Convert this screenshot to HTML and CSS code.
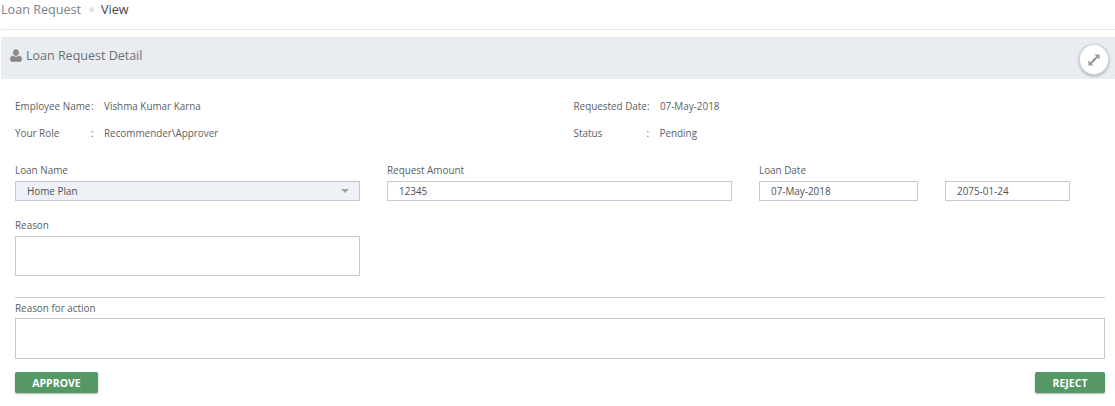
FILE: index.html
```html
<!DOCTYPE html>
<html lang="en">
<head>
<meta charset="utf-8">
<title>Loan Request - View</title>
<link rel="stylesheet" href="styles.css">
</head>
<body>
<header class="crumbs">
  <div class="crumb-list">
    <span class="crumb-parent">Loan Request</span>
    <span class="crumb-dot"></span>
    <span class="crumb-current">View</span>
  </div>
  <a class="top-link">Picture</a>
</header>
<section class="card">
  <div class="card-head">
    <svg class="user-icon" viewBox="0 0 12 13" width="12" height="13"><path d="M6 .3c1.700 0 3 1.400 3 3.200S7.700 6.900 6 6.900 3 5.300 3 3.500 4.300.3 6 .3zM3 6.500c.8.800 1.900 1.200 3 1.200s2.200-.4 3-1.200c1.900.2 2.900 1.700 2.900 3.900 0 1.500-.9 2.300-2.100 2.300H2.200C1 12.700.1 11.900.1 10.400.1 8.200 1.100 6.700 3 6.500z"/></svg>
    <h2 class="card-title">Loan Request Detail</h2>
    <button class="expand" type="button" aria-label="Expand">
      <svg viewBox="0 0 12 12" width="12" height="12"><path d="M6.400 .4h5.200v5.200L9.700 3.700 3.700 9.700l1.900 1.900H.4V6.400l1.900 1.900 6-6z"/><path d="M4 6.400 6.400 4 8 5.600 5.600 8z"/></svg>
    </button>
  </div>
  <div class="card-body">
    <div class="info-grid">
      <div class="info"><span class="info-label">Employee Name</span><span class="info-colon">:</span><span>Vishma Kumar Karna</span></div>
      <div class="info info-right"><span class="info-label">Requested Date</span><span class="info-colon">:</span><span>07-May-2018</span></div>
      <div class="info"><span class="info-label">Your Role</span><span class="info-colon">:</span><span>Recommender\Approver</span></div>
      <div class="info info-right"><span class="info-label">Status</span><span class="info-colon">:</span><span>Pending</span></div>
    </div>
    <div class="form-grid">
      <div class="field">
        <label class="label">Loan Name</label>
        <div class="control select">Home Plan<span class="caret"></span></div>
      </div>
      <div class="field">
        <label class="label">Request Amount</label>
        <div class="control">12345</div>
      </div>
      <div class="field">
        <label class="label">Loan Date</label>
        <div class="control">07-May-2018</div>
      </div>
      <div class="field">
        <div class="control">2075-01-24</div>
      </div>
    </div>
    <div class="field reason">
      <label class="label">Reason</label>
      <div class="control area"></div>
    </div>
    <hr class="rule">
    <div class="field action">
      <label class="label">Reason for action</label>
      <div class="control area wide"></div>
    </div>
    <div class="buttons">
      <button class="btn" type="button">APPROVE</button>
      <button class="btn reject" type="button">REJECT</button>
    </div>
  </div>
</section>
</body>
</html>
```
FILE: styles.css
```css
* { box-sizing: border-box; }
html, body { height: 100%; }
body {
  margin: 0;
  overflow: hidden;
  background: #fff;
  color: #5a5e64;
  font-family: "Open Sans", sans-serif;
  font-size: 9.9px;
}
.crumbs {
  height: 30px;
  margin-left: 1px;
  border-bottom: 1px solid #e7e9ec;
  display: flex;
  justify-content: space-between;
  overflow: hidden;
}
.crumb-list {
  display: flex;
  align-items: center;
  height: 18px;
  font-size: 12.600px;
}
.crumb-parent { color: #7d8187; }
.crumb-dot {
  width: 5px;
  height: 5px;
  border-radius: 50%;
  background: #dfe2e6;
  margin: 0 7px 0 8px;
}
.crumb-current { color: #3f4449; }
.top-link {
  color: #1f7fc4;
  font-size: 12.500px;
  line-height: 14px;
  margin: -13px 95px 0 0;
}
.card { margin: 7px 0 0 1px; }
.card-head {
  height: 42px;
  background: #e9ecf1;
  display: flex;
  align-items: center;
  padding: 0 6px 0 9px;
}
.user-icon { fill: #8c8a88; margin: 0 4px 6px 0; }
.card-title {
  margin: 0 0 6px;
  flex: 1;
  font-size: 12.500px;
  font-weight: 400;
  color: #6b6f76;
}
.expand {
  width: 30px;
  height: 31px;
  margin-top: 3px;
  padding: 0;
  border: 1px solid #d4d5d7;
  border-radius: 50%;
  background: #fff;
  box-shadow: 0 1px 3px rgba(0,0,0,.3);
  display: flex;
  align-items: center;
  justify-content: center;
}
.expand svg { fill: #9b9b9b; }
.card-body { padding: 20px 10px 0 14px; }
.info-grid {
  display: grid;
  grid-template-columns: 558.500px 1fr;
  row-gap: 13px;
}
.info { display: flex; line-height: 14px; white-space: nowrap; }
.info-label { flex: 0 0 76px; }
.info-colon { flex: 0 0 13px; }
.info-right .info-label { flex-basis: 73px; }
.form-grid {
  display: grid;
  grid-template-columns: 345px 345px 159px 125px;
  column-gap: 27px;
  margin-top: 23px;
  align-items: end;
}
.label {
  display: block;
  line-height: 14px;
  margin-bottom: 4px;
}
.control {
  height: 20px;
  line-height: 18px;
  border: 1px solid #c2cad8;
  background: #fff;
  padding: 0 11px;
  color: #4d5157;
}
.select {
  background: #eef1f5;
  position: relative;
}
.caret {
  position: absolute;
  right: 10px;
  top: 7px;
  border: 4px solid transparent;
  border-top-color: #9fa3a8;
  border-bottom: 0;
}
.reason { width: 345px; margin-top: 17px; }
.area { height: 40px; }
.rule {
  height: 1px;
  border: 0;
  background: #c9cdd2;
  margin: 21px 0 0 0;
}
.action { margin-top: 3px; }
.action .label { margin-bottom: 3px; }
.wide { height: 41px; }
.buttons {
  display: flex;
  justify-content: space-between;
  margin-top: 13px;
}
.btn {
  width: 83px;
  height: 21px;
  padding: 0;
  border: 0;
  border-radius: 2px;
  background: #569766;
  color: #fff;
  font: 700 10.500px "Open Sans", sans-serif;
  box-shadow: 0 1px 2px rgba(0,0,0,.3);
}
.reject { width: 70px; }
```
